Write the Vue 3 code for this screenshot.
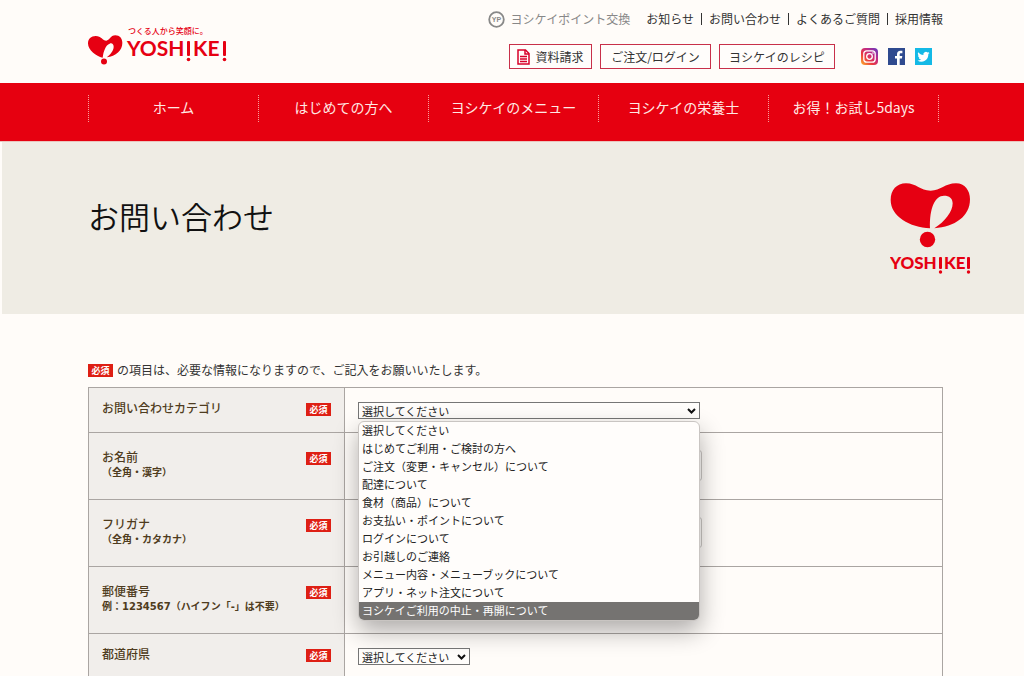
<script setup>
import { ref } from 'vue'

const links = ['お知らせ', 'お問い合わせ', 'よくあるご質問', '採用情報']
const navItems = ['ホーム', 'はじめての方へ', 'ヨシケイのメニュー', 'ヨシケイの栄養士', 'お得！お試し5days']
const placeholder = '選択してください'
const categories = [
  placeholder,
  'はじめてご利用・ご検討の方へ',
  'ご注文（変更・キャンセル）について',
  '配達について',
  '食材（商品）について',
  'お支払い・ポイントについて',
  'ログインについて',
  'お引越しのご連絡',
  'メニュー内容・メニューブックについて',
  'アプリ・ネット注文について',
  'ヨシケイご利用の中止・再開について'
]
const highlighted = ref(categories.length - 1)
const category = ref(placeholder)
const fields = [
  { id: 'category', label: 'お問い合わせカテゴリ', kind: 'category' },
  { id: 'name', label: 'お名前', note: '（全角・漢字）', kind: 'text' },
  { id: 'kana', label: 'フリガナ', note: '（全角・カタカナ）', kind: 'text' },
  { id: 'zip', label: '郵便番号', note: '例：1234567（ハイフン「-」は不要）', kind: 'zip' },
  { id: 'pref', label: '都道府県', kind: 'pref' }
]
</script>

<template>
  <div class="page">
    <header class="header">
      <a href="#" class="logo" aria-label="YOSHIKEI">
        <svg width="142" height="42" viewBox="0 0 142 42">
          <g fill="#e60012">
            <path transform="translate(-8 -13) scale(.3333)" d="M68 134 C48 129 24 111 24 91 C24 78 33 69 47 69 C64 69 68 83 79 83 C88 83 91 67 106 67 C119 67 127 76 127 90 C127 112 108 130 80 133 C92 124 101 112 101 101 C101 93 95 89 89 92 C77 96 70 115 68 134Z" />
            <circle cx="16" cy="35.500" r="3" />
            <text x="40" y="8" class="tagline">つくる人から笑顔に。</text>
            <text x="39" y="30" class="wordmark">YOSH</text>
            <text x="105" y="30" class="wordmark">KE</text>
            <rect x="99" y="15" width="3" height="15" rx="1" />
            <circle cx="100.500" cy="33.500" r="1.800" />
            <rect x="135" y="15" width="3" height="15" rx="1" />
            <circle cx="136.500" cy="33.500" r="1.800" />
          </g>
        </svg>
      </a>
      <div class="tools">
        <div class="links">
          <a href="#" class="point">
            <svg width="17" height="17" viewBox="0 0 17 17">
              <circle cx="8.500" cy="8.500" r="7.300" fill="none" stroke="#888" stroke-width="1.800" />
              <text x="8.500" y="11" text-anchor="middle" class="yp">YP</text>
            </svg>
            ヨシケイポイント交換
          </a>
          <ul>
            <li v-for="l in links" :key="l"><a href="#">{{ l }}</a></li>
          </ul>
        </div>
        <div class="actions">
          <a href="#" class="btn doc">
            <svg width="13" height="16" viewBox="0 0 13 16" fill="none" stroke="#d7002a" stroke-width="1.500">
              <path d="M1 1h7.500L12 4.500V15H1z" />
              <path d="M8 1v4h4" />
              <path d="M3 7.500h7M3 10h7M3 12.500h7" />
            </svg>
            資料請求
          </a>
          <a href="#" class="btn order">ご注文/ログイン</a>
          <a href="#" class="btn recipe">ヨシケイのレシピ</a>
          <div class="social">
            <a href="#" aria-label="Instagram">
              <svg width="17" height="17" viewBox="0 0 17 17">
                <defs>
                  <linearGradient id="ig" x1="0" y1="1" x2="1" y2="0">
                    <stop offset="0" stop-color="#fdb52b" />
                    <stop offset=".35" stop-color="#ec3a3f" />
                    <stop offset=".65" stop-color="#c02a86" />
                    <stop offset="1" stop-color="#5b3bc4" />
                  </linearGradient>
                </defs>
                <rect width="17" height="17" rx="4" fill="url(#ig)" />
                <g fill="none" stroke="#fff" stroke-width="1.300">
                  <rect x="2.800" y="2.800" width="11.400" height="11.400" rx="3" />
                  <circle cx="8.500" cy="8.500" r="2.800" />
                </g>
                <circle cx="12" cy="5" r=".8" fill="#fff" />
              </svg>
            </a>
            <a href="#" aria-label="Facebook">
              <svg width="17" height="17" viewBox="0 0 17 17">
                <rect width="17" height="17" fill="#2f4a8f" />
                <path fill="#fff" d="M9 17v-6.500H7V8h2V6.200C9 4 10.300 2.700 12.400 2.700h2V5.200h-1.500C12 5.200 11.700 5.600 11.700 6.400V8h2.600l-.4 2.500h-2.200V17z" />
              </svg>
            </a>
            <a href="#" aria-label="Twitter">
              <svg width="17" height="17" viewBox="0 0 17 17">
                <rect width="17" height="17" fill="#14b9e6" />
                <path fill="#fff" d="M14.500 4.900c-.4.200-.9.300-1.400.4.500-.3.900-.8 1.100-1.300-.5.300-1 .5-1.600.6A2.500 2.500 0 0 0 8.400 6.900C6.300 6.800 4.500 5.800 3.200 4.200c-.7 1.200-.3 2.600.8 3.300-.4 0-.8-.1-1.100-.3 0 1.200.8 2.200 2 2.500-.4.100-.7.100-1.100 0 .3 1 1.200 1.700 2.300 1.700A5 5 0 0 1 2.500 12.500a7 7 0 0 0 10.800-6.300c.5-.3.900-.8 1.200-1.300z" />
              </svg>
            </a>
          </div>
        </div>
      </div>
    </header>

    <nav class="nav">
      <ul>
        <li v-for="n in navItems" :key="n"><a href="#">{{ n }}</a></li>
      </ul>
    </nav>

    <section class="hero">
      <h1>お問い合わせ</h1>
      <svg width="82" height="94" viewBox="0 0 82 94" role="img" aria-label="YOSHIKEI">
        <g fill="#e60012">
          <path transform="translate(-20 -13) scale(.3333)" d="M180 175 C120 172 62 140 62 90 C62 60 80 40 108 40 C140 40 150 62 182 62 C212 62 225 40 258 40 C285 40 300 62 300 88 C300 140 255 170 193 175 C225 155 248 125 248 100 C248 85 238 77 222 77 C195 77 178 115 180 175Z" />
          <circle cx="37.500" cy="56.500" r="7.700" />
          <text x="0" y="86" class="wordmark-hero">YOSH</text>
          <text x="54" y="86" class="wordmark-hero">KE</text>
          <rect x="49" y="74" width="3" height="12" rx="1" />
          <circle cx="50.500" cy="89" r="1.700" />
          <rect x="77" y="74" width="3" height="12" rx="1" />
          <circle cx="78.500" cy="89" r="1.700" />
        </g>
      </svg>
    </section>

    <main class="main">
      <p class="notice"><span class="badge">必須</span>の項目は、必要な情報になりますので、ご記入をお願いいたします。</p>
      <table>
        <tbody>
          <tr v-for="f in fields" :key="f.id" :class="{ tall: f.note }">
            <th scope="row">
              <div class="head">
                <label :for="f.id">{{ f.label }}<small v-if="f.note">{{ f.note }}</small></label>
                <span class="badge">必須</span>
              </div>
            </th>
            <td>
              <div v-if="f.kind === 'category'" class="dropdown wide">
                <select :id="f.id" v-model="category">
                  <option v-for="c in categories" :key="c">{{ c }}</option>
                </select>
                <svg class="chevron" width="9" height="6" viewBox="0 0 9 6"><path d="M1 1l3.500 3.500L8 1" /></svg>
                <ul class="menu" role="listbox" aria-label="お問い合わせカテゴリ">
                  <li
                    v-for="(c, i) in categories"
                    :key="c"
                    role="option"
                    :aria-selected="i === highlighted"
                    :class="{ active: i === highlighted }"
                    @mouseenter="highlighted = i"
                    @click="category = c"
                  >{{ c }}</li>
                </ul>
              </div>
              <div v-else-if="f.kind === 'pref'" class="dropdown narrow">
                <select :id="f.id">
                  <option>{{ placeholder }}</option>
                </select>
                <svg class="chevron" width="9" height="6" viewBox="0 0 9 6"><path d="M1 1l3.500 3.500L8 1" /></svg>
              </div>
              <input v-else :id="f.id" type="text" :class="f.kind">
            </td>
          </tr>
        </tbody>
      </table>
    </main>
  </div>
</template>

<style>
html {
  background: #fffcf9;
  scrollbar-width: none;
}
</style>

<style scoped>
.page {
  font-family: "Noto Sans CJK JP", "Noto Sans", sans-serif;
  font-size: 12px;
  line-height: 16px;
  color: #333;
}
.page * {
  box-sizing: border-box;
}
a {
  color: inherit;
  text-decoration: none;
}
ul {
  list-style: none;
  margin: 0;
  padding: 0;
}
svg {
  display: block;
  flex: none;
}
.header {
  display: flex;
  justify-content: space-between;
  height: 83px;
  padding: 0 81px 0 88px;
}
.logo {
  padding-top: 26px;
}
.tagline {
  font-size: 8px;
  font-weight: 500;
}
.wordmark {
  font: 700 21px Lato, sans-serif;
}
.wordmark-hero {
  font: 900 17px Lato, sans-serif;
}
.tools {
  display: flex;
  flex-direction: column;
  align-items: flex-end;
  padding-top: 10px;
}
.links {
  display: flex;
  align-items: center;
  height: 18px;
}
.point {
  display: flex;
  align-items: center;
  gap: 5px;
  margin-right: 16px;
  color: #888;
}
.yp {
  font: 700 7px "Liberation Sans", sans-serif;
  fill: #888;
}
.links ul {
  display: flex;
}
.links li + li {
  display: flex;
  align-items: center;
}
.links li + li::before {
  content: "";
  width: 1px;
  height: 12px;
  margin: 0 7px;
  background: #333;
}
.actions {
  display: flex;
  align-items: center;
  gap: 8px;
  margin-top: 16px;
  padding-right: 11px;
}
.btn {
  display: flex;
  align-items: center;
  justify-content: center;
  gap: 5px;
  height: 25px;
  border: 1px solid #c8304a;
  background: #fffdfb;
}
.doc {
  width: 83px;
}
.order {
  width: 111px;
}
.recipe {
  width: 116px;
}
.social {
  display: flex;
  gap: 10px;
  margin-left: 18px;
}
.nav {
  height: 59px;
  padding: 12px 85px 0 88px;
  background: #e60010;
  border-bottom: 1px solid #eac4bd;
}
.nav ul {
  display: flex;
  border-left: 1px dotted #f7a09b;
}
.nav li {
  flex: 1;
  border-right: 1px dotted #f7a09b;
}
.nav a {
  display: block;
  font-size: 14px;
  line-height: 25px;
  padding-bottom: 2px;
  text-align: center;
  color: #ffe9e4;
}
.hero {
  display: flex;
  justify-content: space-between;
  align-items: flex-start;
  height: 172px;
  margin-left: 2px;
  padding: 41px 52px 0 86px;
  background: #efece4;
}
h1 {
  margin: 11px 0 0;
  font-size: 31px;
  font-weight: 350;
  line-height: 44px;
  color: #111;
}
.main {
  padding: 48px 81px 0 88px;
}
.notice {
  display: flex;
  align-items: center;
  gap: 4px;
  margin: 0;
  padding-bottom: 9px;
}
.badge {
  flex: none;
  width: 25px;
  height: 13px;
  font-size: 9px;
  font-weight: 700;
  line-height: 13px;
  text-align: center;
  color: #fff;
  background: #de1f14;
}
table {
  width: 100%;
  table-layout: fixed;
  border-collapse: collapse;
}
th,
td {
  border: 1px solid #aaa5a2;
  vertical-align: top;
  text-align: left;
}
th {
  width: 256px;
  padding: 12px 13px 16px;
  background: #f1eeeb;
  color: #4f3c20;
}
td {
  padding: 14px 13px 12px;
}
.tall th {
  padding: 16px 13px 18px;
}
.tall td {
  padding: 17px 13px;
}
.head {
  display: flex;
  justify-content: space-between;
  align-items: flex-start;
}
.head .badge {
  margin-top: 3px;
}
label,
small {
  display: block;
}
label {
  font-weight: 500;
}
small {
  font-family: "DejaVu Sans", "Noto Sans CJK JP", sans-serif;
  font-size: 10px;
  font-weight: 700;
}
select,
input {
  display: block;
  margin: 0;
  font-family: inherit;
  font-size: 11px;
  color: #222;
  background: #fffdfb;
}
select {
  appearance: none;
  width: 100%;
  height: 17px;
  padding: 0 3px;
  border: 1px solid #767676;
  border-radius: 0;
  line-height: 14px;
}
.dropdown {
  position: relative;
  max-width: 100%;
}
.wide {
  width: 342px;
}
.narrow {
  width: 112px;
}
.chevron {
  position: absolute;
  top: 6px;
  right: 4px;
  pointer-events: none;
  fill: none;
  stroke: #111;
  stroke-width: 2;
}
input {
  height: 31px;
  border: 1px solid #ccc8c5;
  border-radius: 3px;
}
.text {
  width: 344px;
}
.zip {
  width: 160px;
}
.menu {
  position: absolute;
  z-index: 1;
  top: 100%;
  left: 0;
  right: 0;
  margin-top: 2px;
  overflow: hidden;
  border: 1px solid #c9c5c2;
  border-radius: 6px;
  background: #fffdfb;
  box-shadow: 0 10px 24px rgba(0, 0, 0, 0.32);
}
.menu li {
  padding: 0 3px 2px;
  font-size: 11px;
  line-height: 16px;
  color: #222;
}
.menu .active {
  color: #fff;
  background: #757371;
}
</style>
